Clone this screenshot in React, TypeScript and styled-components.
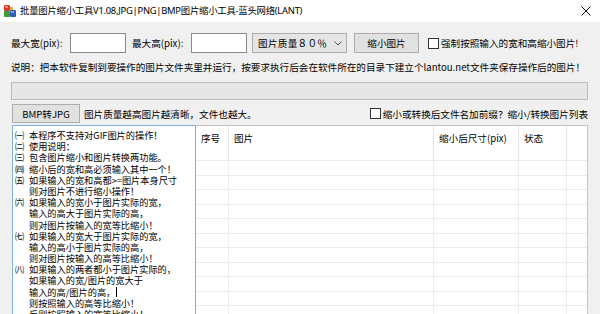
import React from "react";
import styled, { createGlobalStyle } from "styled-components";

const GlobalStyle = createGlobalStyle`
    html, body {
        margin: 0;
        padding: 0;
        background: #f0f0f0;
    }
    * {
        box-sizing: border-box;
    }
`;

const FONT = `"Noto Sans CJK SC", "Noto Sans", sans-serif`;
const TITLE_FONT = `"Noto Sans", "Noto Sans CJK SC", sans-serif`;

const Window = styled.div`
    width: 600px;
    height: 314px;
    overflow: hidden;
    display: flex;
    flex-direction: column;
    font-family: ${FONT};
    font-size: 9.6px;
    color: #000;
    background: #f0f0f0;
`;

const TitleBar = styled.div`
    height: 22px;
    flex: none;
    display: flex;
    align-items: center;
    background: #fff;
    padding-left: 3px;
    .title {
        margin-left: 3px;
        font-family: ${TITLE_FONT};
        font-size: 9.4px;
        letter-spacing: -0.25px;
        line-height: 12px;
    }
    .close {
        margin-left: auto;
        margin-right: 9px;
        display: flex;
    }
`;

const Body = styled.div`
    flex: 1;
    display: flex;
    flex-direction: column;
    padding: 0 12px 0 11px;
    min-height: 0;
`;

const Row = styled.div<{ $top: number; $h: number }>`
    display: flex;
    align-items: center;
    flex: none;
    margin-top: ${(p) => p.$top}px;
    height: ${(p) => p.$h}px;
    white-space: nowrap;
`;

const Label = styled.span<{ $w?: number; $ml?: number }>`
    display: inline-block;
    width: ${(p) => (p.$w ? `${p.$w}px` : "auto")};
    margin-left: ${(p) => p.$ml ?? 0}px;
    line-height: 12px;
`;

const TextBox = styled.div`
    width: 56px;
    height: 20px;
    background: #fff;
    border: 1px solid #8a8a8a;
`;

const Select = styled.div`
    width: 95px;
    height: 20px;
    margin-left: 5px;
    background: #e5e5e5;
    border: 1px solid #adadad;
    display: flex;
    align-items: center;
    padding-left: 5px;
    padding-right: 4px;
    .value {
        letter-spacing: 0.3px;
    }
    .arrow {
        margin-left: auto;
        display: flex;
    }
`;

const Button = styled.div<{ $w: number; $h: number; $ml?: number }>`
    width: ${(p) => p.$w}px;
    height: ${(p) => p.$h}px;
    margin-left: ${(p) => p.$ml ?? 0}px;
    background: #e1e1e1;
    border: 1px solid #adadad;
    display: flex;
    align-items: center;
    justify-content: center;
    line-height: 12px;
`;

const CheckBox = styled.span<{ $ml?: number | "auto" }>`
    display: inline-block;
    width: 11px;
    height: 11px;
    flex: none;
    background: #fff;
    border: 1px solid #333;
    margin-left: ${(p) => (p.$ml === "auto" ? "auto" : `${p.$ml ?? 0}px`)};
    margin-right: 2px;
`;

const Progress = styled.div`
    flex: none;
    margin-top: 2px;
    height: 18px;
    background: #e6e6e6;
    border: 1px solid #bcbcbc;
`;

const Main = styled.div`
    flex: 1;
    display: flex;
    margin-top: 1px;
    min-height: 0;
`;

const Memo = styled.div`
    width: 184px;
    flex: none;
    height: 220px;
    background: #fff;
    border: 1px solid #7fb0e4;
    margin-left: 1px;
    padding: 4px 0 0 2px;
    font-size: 9.2px;
`;

const MemoLine = styled.div<{ $indent: boolean }>`
    height: 11.2px;
    line-height: 11.2px;
    white-space: nowrap;
    padding-left: ${(p) => (p.$indent ? 14 : 0)}px;
    .num {
        display: inline-block;
        width: 14px;
    }
    .caret {
        display: inline-block;
        width: 1px;
        height: 10px;
        background: #000;
        vertical-align: -1px;
        margin-left: 1px;
    }
`;

const COLS = "33px 205px 85px 48px 1fr";

const ListView = styled.div`
    flex: 1;
    height: 220px;
    background: #fff;
    border: 1px solid #c4c4c4;
    border-left: none;
`;

const HeaderRow = styled.div`
    display: grid;
    grid-template-columns: ${COLS};
    height: 35px;
    border-bottom: 1px solid #ededed;
`;

const HeaderCell = styled.div`
    border-right: 1px solid #e6e6e6;
    padding: 6px 0 0 5px;
    line-height: 12px;
    white-space: nowrap;
    &:last-child {
        border-right: none;
    }
`;

const GridRow = styled.div`
    display: grid;
    grid-template-columns: ${COLS};
    height: 14.5px;
    border-bottom: 1px solid #ededed;
`;

const GridCell = styled.div`
    border-right: 1px solid #ededed;
    &:last-child {
        border-right: none;
    }
`;

const memoLines: { num?: string; text: string; caret?: boolean }[] = [
    { num: "㈠", text: "本程序不支持对GIF图片的操作！" },
    { num: "㈡", text: "使用说明：" },
    { num: "㈢", text: "包含图片缩小和图片转换两功能。" },
    { num: "㈣", text: "缩小后的宽和高必须输入其中一个！" },
    { num: "㈤", text: "如果输入的宽和高都>=图片本身尺寸" },
    { text: "则对图片不进行缩小操作！" },
    { num: "㈥", text: "如果输入的宽小于图片实际的宽，" },
    { text: "输入的高大于图片实际的高，" },
    { text: "则对图片按输入的宽等比缩小！" },
    { num: "㈦", text: "如果输入的宽大于图片实际的宽，" },
    { text: "输入的高小于图片实际的高，" },
    { text: "则对图片按输入的高等比缩小！" },
    { num: "㈧", text: "如果输入的两者都小于图片实际的，" },
    { text: "如果输入的宽/图片的宽大于" },
    { text: "输入的高/图片的高，", caret: true },
    { text: "则按照输入的高等比缩小！" },
    { text: "反则按照输入的宽等比缩小！" },
];

const headers = ["序号", "图片", "缩小后尺寸(pix)", "状态", ""];

function AppIcon() {
    return (
        <svg width="14" height="14" viewBox="0 0 14 14">
            <rect x="1" y="1" width="6" height="6" rx="1" fill="#d9382b" />
            <rect x="2" y="2" width="3" height="2" fill="#f08a7e" />
            <rect x="7" y="3" width="3" height="3" rx="0.5" fill="#e8a23a" />
            <rect x="1" y="7" width="6" height="6" rx="1" fill="#3f9e3a" />
            <rect x="7" y="6" width="6" height="7" rx="1" fill="#2e5fb8" />
            <rect x="8" y="7" width="3" height="2" fill="#7fa3e0" />
        </svg>
    );
}

function CloseIcon() {
    return (
        <svg width="10" height="10" viewBox="0 0 10 10">
            <path d="M0.5 0.5 L9.5 9.5 M9.5 0.5 L0.5 9.5" stroke="#111" strokeWidth="1" />
        </svg>
    );
}

function Chevron() {
    return (
        <svg width="8" height="5" viewBox="0 0 8 5">
            <path d="M0.5 0.5 L4 4 L7.5 0.5" stroke="#555" strokeWidth="1" fill="none" />
        </svg>
    );
}

export default function App() {
    return (
        <>
            <GlobalStyle />
            <Window>
                <TitleBar>
                    <AppIcon />
                    <span className="title">
                        批量图片缩小工具V1.08,JPG|PNG|BMP图片缩小工具-蓝头网络(LANT)
                    </span>
                    <span className="close">
                        <CloseIcon />
                    </span>
                </TitleBar>
                <Body>
                    <Row $top={10} $h={22}>
                        <Label $w={59}>最大宽(pix):</Label>
                        <TextBox />
                        <Label $w={59} $ml={6}>
                            最大高(pix):
                        </Label>
                        <TextBox />
                        <Select>
                            <span className="value">图片质量８０％</span>
                            <span className="arrow">
                                <Chevron />
                            </span>
                        </Select>
                        <Button $w={65} $h={20} $ml={7}>
                            缩小图片
                        </Button>
                        <CheckBox $ml={9} />
                        <Label>强制按照输入的宽和高缩小图片!</Label>
                    </Row>
                    <Row $top={0} $h={26}>
                        <Label>
                            说明：把本软件复制到要操作的图片文件夹里并运行，按要求执行后会在软件所在的目录下建立个lantou.net文件夹保存操作后的图片！
                        </Label>
                    </Row>
                    <Progress />
                    <Row $top={3} $h={21}>
                        <Button $w={68} $h={19} $ml={1}>
                            BMP转JPG
                        </Button>
                        <Label $ml={4}>图片质量越高图片越清晰，文件也越大。</Label>
                        <CheckBox $ml="auto" />
                        <Label>缩小或转换后文件名加前缀？缩小/转换图片列表</Label>
                    </Row>
                    <Main>
                        <Memo>
                            {memoLines.map((l, i) => (
                                <MemoLine key={i} $indent={!l.num}>
                                    {l.num && <span className="num">{l.num}</span>}
                                    {l.text}
                                    {l.caret && <span className="caret" />}
                                </MemoLine>
                            ))}
                        </Memo>
                        <ListView>
                            <HeaderRow>
                                {headers.map((h, i) => (
                                    <HeaderCell key={i}>{h}</HeaderCell>
                                ))}
                            </HeaderRow>
                            {Array.from({ length: 11 }).map((_, r) => (
                                <GridRow key={r}>
                                    {headers.map((_, c) => (
                                        <GridCell key={c} />
                                    ))}
                                </GridRow>
                            ))}
                        </ListView>
                    </Main>
                </Body>
            </Window>
        </>
    );
}
